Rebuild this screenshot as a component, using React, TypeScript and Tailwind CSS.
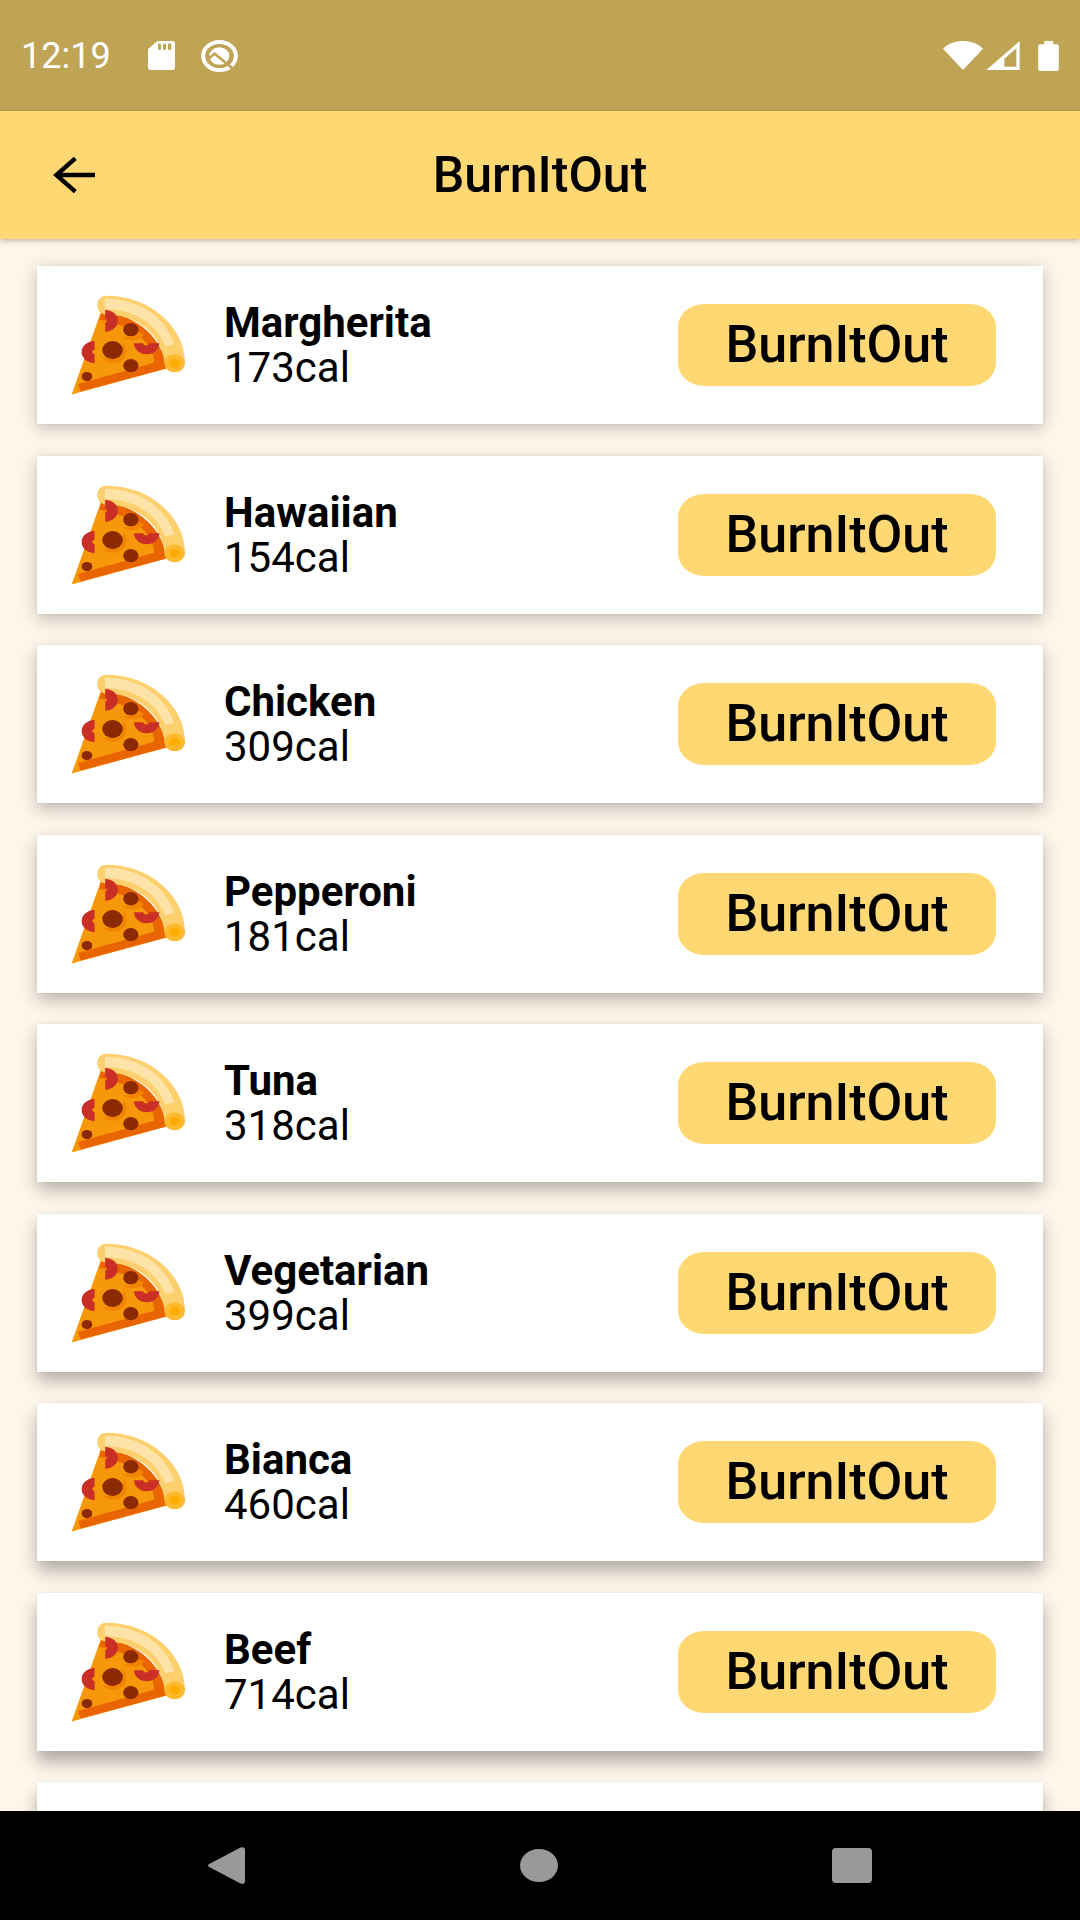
type Pizza = {
  name: string;
  calories: number;
};

const pizzas: Pizza[] = [
  { name: "Margherita", calories: 173 },
  { name: "Hawaiian", calories: 154 },
  { name: "Chicken", calories: 309 },
  { name: "Pepperoni", calories: 181 },
  { name: "Tuna", calories: 318 },
  { name: "Vegetarian", calories: 399 },
  { name: "Bianca", calories: 460 },
  { name: "Beef", calories: 714 },
];

// cards further down the screen cast a longer, darker shadow
function cardShadow(index: number) {
  const offset = 4 + index;
  const alpha = 0.24 + index * 0.01;
  return `0 ${offset}px 16px rgba(0, 0, 0, ${alpha}), 0 0 2px rgba(0, 0, 0, 0.08)`;
}

function PizzaIcon() {
  return (
    <svg viewBox="32 44 346 300" className="h-[100px] w-[115px] shrink-0" aria-hidden="true">
      <path d="M123 92 34 343 320 265C312 190 240 105 123 92Z" fill="#f7980b" />
      <path d="M123 95 C235 102 312 180 318 265L61 334 53 311 282 247C281 190 220 132 117 121Z" fill="#e96500" />
      <path d="M120 119C190 126 281 190 282 247L150 284 100 200Z" fill="#f7980b" />
      <path d="M190 181C204 205 202 232 178 244C160 252 140 249 125 234C150 240 195 225 190 181Z" fill="#f28500" />
      <path d="M234 156C242 158 251 160 251 164C238 184 204 184 186 169C207 172 228 168 234 156Z" fill="#f28500" />
      <ellipse cx="157" cy="209" rx="31" ry="27" fill="#8b2a00" />
      <ellipse cx="212" cy="148" rx="23" ry="20" fill="#8b2a00" />
      <ellipse cx="212" cy="256" rx="23" ry="20" fill="#8b2a00" />
      <ellipse cx="80" cy="289" rx="16" ry="14" fill="#8b2a00" />
      <path d="M138 46C270 46 375 140 375 249L314 250C306 165 235 102 134 102C119 100 111 89 111 74C111 58 122 46 138 46Z" fill="#fdcf6d" />
      <path d="M134 55C235 55 315 108 343 192L315 198C288 126 220 88 134 86Z" fill="#fee3a9" />
      <ellipse cx="344" cy="249" rx="31" ry="27" fill="#ffb92e" />
      <ellipse cx="344" cy="249" rx="16" ry="13" fill="#ffab00" />
      <path d="M135 88C158 90 173 104 173 121C173 139 157 153 135 154V126C143 126 143 116 135 116Z" fill="#c92e27" />
      <path d="M103 182V208C95 209 92 217 103 222V249C80 247 64 233 64 215C64 198 79 183 103 182Z" fill="#c92e27" />
      <path d="M221 189H249C252 198 264 198 267 189H298C296 208 281 222 260 222C238 222 223 208 221 189Z" fill="#c92e27" />
    </svg>
  );
}

function StatusBar() {
  return (
    <div className="flex h-[111px] shrink-0 items-center bg-[#bfa456] px-[21px] text-white">
      <span className="w-[127px] text-[36px] leading-[40px]">12:19</span>
      {/* SD card */}
      <svg viewBox="0 0 81 87" className="h-[29px] w-[27px]" fill="currentColor" aria-hidden="true">
        <path fillRule="evenodd" d="M28 0H73Q81 0 81 8V79Q81 87 73 87H8Q0 87 0 79V24ZM30 8V26H39V8ZM45 8V26H54V8ZM60 8V26H70V8Z" />
      </svg>
      {/* Debug notification */}
      <svg viewBox="0 0 111 96" className="ml-[26px] h-[32px] w-[37px]" fill="none" aria-hidden="true">
        <ellipse cx="55.5" cy="48" rx="49" ry="42" stroke="currentColor" strokeWidth="12" />
        <ellipse cx="55" cy="48" rx="30" ry="26" fill="currentColor" />
        <path d="M20 58 41 41 96 86" stroke="#bfa456" strokeWidth="8" />
      </svg>
      {/* Wifi */}
      <svg viewBox="0 0 120 87" className="ml-auto h-[29px] w-[40px]" fill="currentColor" aria-hidden="true">
        <path d="M0 23C32-8 88-8 120 23L60 87Z" />
      </svg>
      {/* Signal */}
      <svg viewBox="0 0 100 87" className="ml-[3px] h-[29px] w-[34px]" fill="currentColor" aria-hidden="true">
        <path fillRule="evenodd" d="M100 0V87H0ZM90 22 54 53V77H90Z" />
      </svg>
      {/* Battery */}
      <svg viewBox="0 0 62 90" className="ml-[18px] h-[30px] w-[21px]" fill="currentColor" aria-hidden="true">
        <path d="M18 0H45V10H56Q62 10 62 16V84Q62 90 56 90H6Q0 90 0 84V16Q0 10 6 10H18Z" />
      </svg>
    </div>
  );
}

function PizzaCard({ pizza, index }: { pizza: Pizza; index: number }) {
  return (
    <li
      className="relative flex h-[158px] shrink-0 items-center bg-white pr-[47px] pl-[34px]"
      style={{ boxShadow: cardShadow(index) }}
    >
      <PizzaIcon />
      <div className="ml-[38px] flex-1 text-[42px] leading-[45px]">
        <h2 className="font-bold">{pizza.name}</h2>
        <p>{pizza.calories}cal</p>
      </div>
      <button
        type="button"
        className="h-[82px] w-[318px] rounded-[26px_/_23px] bg-[#ffd873] text-[52px] leading-none font-medium"
      >
        BurnItOut
      </button>
    </li>
  );
}

export default function App() {
  return (
    <div className="flex h-screen flex-col overflow-hidden bg-[#fff6eb] font-[Roboto,sans-serif] text-black">
      <StatusBar />

      {/* App bar */}
      <header className="relative z-10 grid h-[128px] shrink-0 grid-cols-[1fr_auto_1fr] items-center bg-[#ffd873] px-[53px] shadow-[0_2px_5px_rgba(0,0,0,0.25)]">
        <button type="button" aria-label="Back" className="w-[42px]">
          <svg viewBox="0 0 126 108" className="h-[36px] w-[42px]" fill="none" stroke="#000" strokeWidth="13" aria-hidden="true">
            <path d="M67 4 10 54 67 104M10 54H126" />
          </svg>
        </button>
        <h1 className="text-[50px] leading-[56px] font-medium">BurnItOut</h1>
      </header>

      {/* Pizza list */}
      <ul className="flex min-h-0 flex-1 flex-col justify-between px-[37px] pt-[27px]">
        {pizzas.map((pizza, index) => (
          <PizzaCard key={pizza.name} pizza={pizza} index={index} />
        ))}
        <li
          className="relative h-[29px] shrink-0 bg-white"
          style={{ boxShadow: cardShadow(pizzas.length) }}
        />
      </ul>

      {/* System navigation */}
      <nav className="relative z-10 flex h-[109px] shrink-0 items-center justify-between bg-black px-[208px] text-[#999999]">
        <button type="button" aria-label="Back">
          <svg viewBox="0 0 37 37" className="h-[37px] w-[37px]" fill="currentColor" aria-hidden="true">
            <path d="M1.2 17 32.5.5Q37-.8 37 3V34Q37 37.8 32.5 36.5L1.2 20Q-1.2 18.5 1.2 17Z" />
          </svg>
        </button>
        <button type="button" aria-label="Home">
          <svg viewBox="0 0 38 33" className="h-[33px] w-[38px]" fill="currentColor" aria-hidden="true">
            <ellipse cx="19" cy="16.5" rx="19" ry="16.5" />
          </svg>
        </button>
        <button type="button" aria-label="Recent apps">
          <svg viewBox="0 0 40 35" className="h-[35px] w-[40px]" fill="currentColor" aria-hidden="true">
            <rect width="40" height="35" rx="4" />
          </svg>
        </button>
      </nav>
    </div>
  );
}
